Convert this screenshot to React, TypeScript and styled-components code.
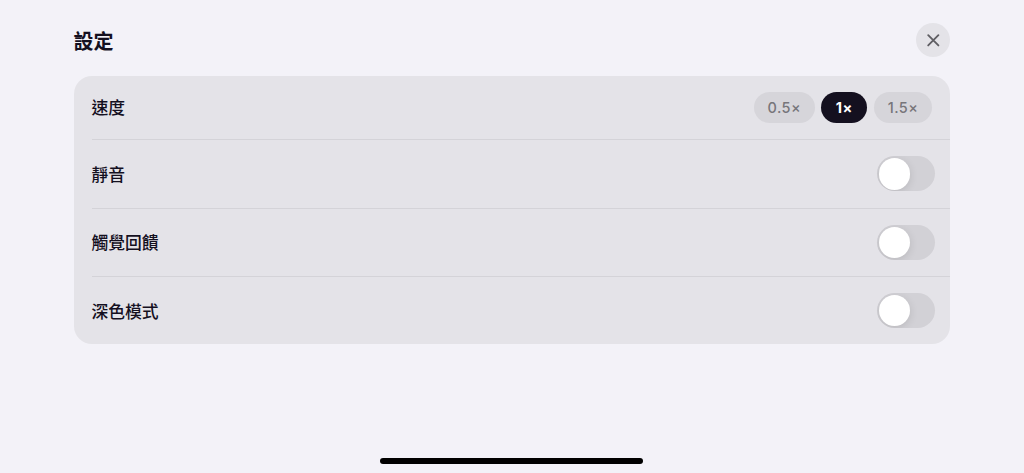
import React, { useState } from 'react'
import styled, { createGlobalStyle } from 'styled-components'

const speeds = [
    { label: '0.5×', width: 61 },
    { label: '1×', width: 45.5 },
    { label: '1.5×', width: 58.7 },
]

const options = ['靜音', '觸覺回饋', '深色模式']

export default function App() {
    const [speed, setSpeed] = useState('1×')
    const [enabled, setEnabled] = useState<string[]>([])

    const toggle = (name: string) => {
        setEnabled(enabled.includes(name) ? enabled.filter((item) => item !== name) : [...enabled, name])
    }

    return (
        <>
            <GlobalStyle />
            <Screen>
                <Header>
                    <Title>設定</Title>
                    <CloseButton aria-label="關閉">
                        <svg width="14" height="14" viewBox="0 0 14 14" fill="none">
                            <path d="M2.2 2.2 12.4 12.4M12.4 2.2 2.2 12.4" stroke="#5f5e63" strokeWidth="1.85" strokeLinecap="round" />
                        </svg>
                    </CloseButton>
                </Header>
                <Card>
                    <SpeedRow>
                        <Label>速度</Label>
                        <Speeds>
                            {speeds.map((item) => (
                                <SpeedButton
                                    key={item.label}
                                    $width={item.width}
                                    $active={item.label === speed}
                                    onClick={() => setSpeed(item.label)}
                                >
                                    {item.label}
                                </SpeedButton>
                            ))}
                        </Speeds>
                    </SpeedRow>
                    {options.map((name) => (
                        <Row key={name}>
                            <Label>{name}</Label>
                            <Switch
                                role="switch"
                                aria-label={name}
                                aria-checked={enabled.includes(name)}
                                $on={enabled.includes(name)}
                                onClick={() => toggle(name)}
                            >
                                <Thumb />
                            </Switch>
                        </Row>
                    ))}
                </Card>
                <HomeIndicator />
            </Screen>
        </>
    )
}

const GlobalStyle = createGlobalStyle`
    * {
        box-sizing: border-box;
    }

    body {
        margin: 0;
        background: #f3f2f8;
        color: #14101f;
        font-family: Inter, 'Noto Sans CJK TC', sans-serif;
    }

    button {
        border: 0;
        padding: 0;
        font-family: inherit;
        cursor: pointer;
    }
`

const Screen = styled.main`
    display: flex;
    flex-direction: column;
    height: 473px;
    padding: 23px 74px 9px 73.5px;
`

const Header = styled.header`
    display: flex;
    align-items: center;
    justify-content: space-between;
    height: 34px;
    margin-bottom: 19px;
`

const Title = styled.h1`
    margin: 0;
    padding-top: 3px;
    font-size: 20px;
    font-weight: 700;
    line-height: 30px;
`

const CloseButton = styled.button`
    display: flex;
    align-items: center;
    justify-content: center;
    width: 34px;
    height: 34px;
    border-radius: 50%;
    background: #e4e3e8;
`

const Card = styled.section`
    border-radius: 18px;
    background: #e4e3e8;
`

const Row = styled.div`
    display: flex;
    align-items: center;
    justify-content: space-between;
    height: 68.4px;
    margin-left: 18px;
    padding-right: 15.5px;
    border-top: 1px solid #d4d3d8;
`

const Label = styled.span`
    padding-top: 2px;
    font-size: 16.8px;
    font-weight: 500;
    line-height: 24px;
`

const SpeedRow = styled(Row)`
    height: 63.2px;
    padding-right: 17.7px;
    border-top: 0;

    ${Label} {
        padding-top: 1px;
    }
`

const Speeds = styled.div`
    display: flex;
    gap: 6.7px;
`

const SpeedButton = styled.button<{ $width: number; $active: boolean }>`
    width: ${(props) => props.$width}px;
    height: 31.3px;
    border-radius: 16px;
    background: ${(props) => (props.$active ? '#14101f' : '#d6d5da')};
    color: ${(props) => (props.$active ? '#fff' : '#77767a')};
    font-size: 14.5px;
    font-weight: ${(props) => (props.$active ? 700 : 500)};
    font-feature-settings: 'calt' 0;
    letter-spacing: 0.4px;
`

const Switch = styled.button<{ $on: boolean }>`
    display: flex;
    align-items: center;
    justify-content: ${(props) => (props.$on ? 'flex-end' : 'flex-start')};
    width: 57.9px;
    height: 35px;
    padding: 0 2px;
    border-radius: 18px;
    background: ${(props) => (props.$on ? '#34c759' : '#d2d1d6')};
    overflow: hidden;
`

const Thumb = styled.span`
    width: 31.3px;
    height: 31.3px;
    border-radius: 50%;
    background: #fff;
    box-shadow: 0 2px 8px rgba(0, 0, 0, 0.12);
`

const HomeIndicator = styled.div`
    width: 263px;
    height: 6px;
    margin: auto auto 0;
    border-radius: 3px;
    background: #000;
`
